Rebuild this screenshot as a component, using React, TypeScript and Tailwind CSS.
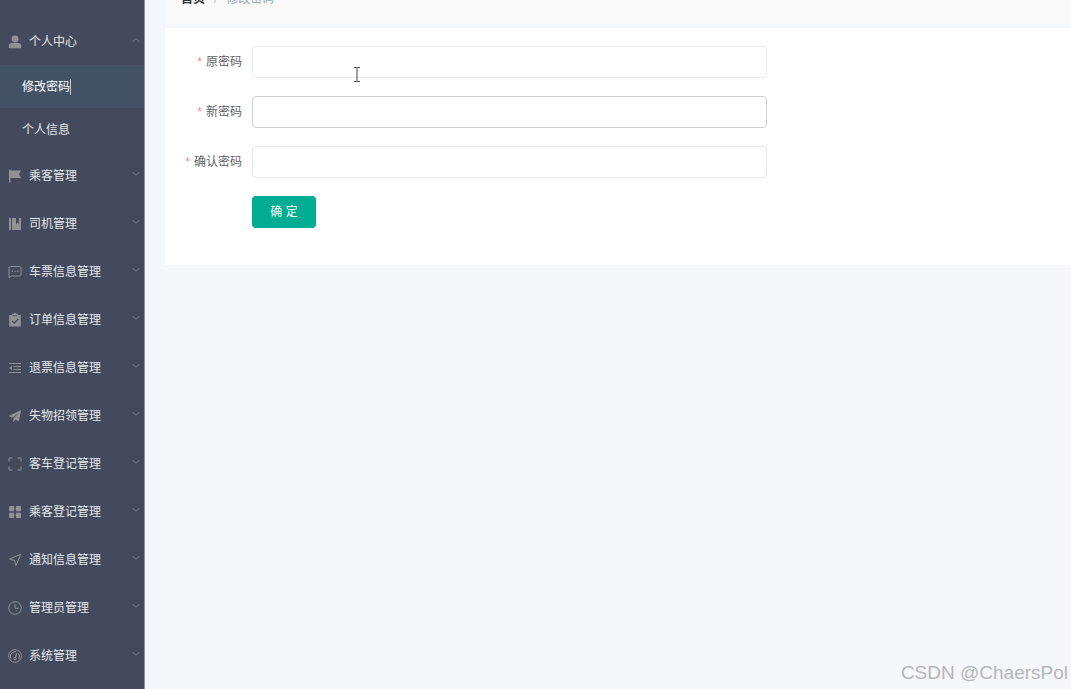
import { FormEvent, ReactElement, ReactNode, useState } from "react";

interface MenuItem {
  title: string;
  icon: ReactNode;
}

const menuItems: MenuItem[] = [
  {
    title: "乘客管理",
    icon: <path d="M1 .5h1.4v1H13l-2 3.7 2 3.8H2.4v4.5H1z" fill="currentColor" />,
  },
  {
    title: "司机管理",
    icon: (
      <path
        d="M1 1h2v12H1zM4 1h4v6l1.5-1.3L11 7V1h2v12H4z"
        fill="currentColor"
      />
    ),
  },
  {
    title: "车票信息管理",
    icon: (
      <>
        <path
          d="M2.5 1.5h9a1.5 1.5 0 0 1 1.5 1.5v6.5a1.5 1.5 0 0 1-1.5 1.5H3.6L1 12.8V3a1.5 1.5 0 0 1 1.5-1.5z"
          fill="none"
          stroke="currentColor"
        />
        <path
          d="M3.7 5.7H5V7H3.7zM6.4 5.7h1.3V7H6.4zM9.1 5.7h1.3V7H9.1z"
          fill="currentColor"
        />
      </>
    ),
  },
  {
    title: "订单信息管理",
    icon: (
      <>
        <path
          d="M1.2 2H4V.8h1.6L6 0h2l.4.8H10V2h2.800v11.500H1.200z"
          fill="currentColor"
        />
        <path d="M4.500 2.700h5" stroke="#434a5c" strokeWidth=".7" />
        <path
          d="M4 7.800l2.300 2.300L10.300 6"
          fill="none"
          stroke="#434a5c"
          strokeWidth="1.100"
        />
      </>
    ),
  },
  {
    title: "退票信息管理",
    icon: (
      <>
        <path
          d="M1 2.500h12M5.500 5.500H13M5.500 8.500H13M1 11.500h12"
          stroke="currentColor"
          strokeWidth="1.200"
        />
        <path d="M4 4.700v4.600L1.200 7z" fill="currentColor" />
      </>
    ),
  },
  {
    title: "失物招领管理",
    icon: (
      <path
        d="M13.200 1L.6 7l3.600 1.700L10.600 4 5.300 9.300v4l2.200-2.500 3.300 1.500z"
        fill="currentColor"
      />
    ),
  },
  {
    title: "客车登记管理",
    icon: (
      <path
        d="M1 4.500V1h3.500M9.500 1H13v3.500M13 9.500V13H9.500M4.500 13H1V9.500"
        fill="none"
        stroke="currentColor"
      />
    ),
  },
  {
    title: "乘客登记管理",
    icon: (
      <g fill="currentColor">
        <rect x="1" y="1" width="5.200" height="5.200" rx=".8" />
        <rect x="7.800" y="1" width="5.200" height="5.200" rx=".8" />
        <rect x="1" y="7.800" width="5.200" height="5.200" rx=".8" />
        <rect x="7.800" y="7.800" width="5.200" height="5.200" rx=".8" />
      </g>
    ),
  },
  {
    title: "通知信息管理",
    icon: (
      <path
        d="M12.800 1.200L1.500 6l5 1.500L8 12.600z"
        fill="none"
        stroke="currentColor"
        strokeLinejoin="round"
      />
    ),
  },
  {
    title: "管理员管理",
    icon: (
      <g fill="none" stroke="currentColor">
        <circle cx="7" cy="7" r="6.300" />
        <path d="M7 3.300V7.300h3.300" />
      </g>
    ),
  },
  {
    title: "系统管理",
    icon: (
      <g fill="none" stroke="currentColor">
        <circle cx="7" cy="7" r="6.300" />
        <path d="M3.200 9.800A4.500 4.500 0 0 1 8 2.800M10.300 4.300a4.500 4.500 0 0 1 .5 5.500" />
        <path d="M8.800 4.200L7.200 9" strokeWidth="1.200" />
        <circle cx="7" cy="9.600" r="1" />
      </g>
    ),
  },
];

const fields = [
  { name: "password", label: "原密码", border: "border-[#e9ebf0]" },
  { name: "newPassword", label: "新密码", border: "border-[#cfd0d3]" },
  { name: "repeatPassword", label: "确认密码", border: "border-[#e6e7eb]" },
];

const MenuIcon = ({ children }: { children: ReactNode }): ReactElement => (
  <svg viewBox="0 0 14 14" className="size-[14px] shrink-0 text-[#8f9298]">
    {children}
  </svg>
);

const Arrow = ({ open }: { open?: boolean }): ReactElement => (
  <svg viewBox="0 0 8 8" className="mb-1 ml-auto size-2 shrink-0 text-[#7d838e]">
    <path
      d={open ? "M.5 6L4 2.500 7.500 6" : "M.5 2L4 5.500 7.500 2"}
      fill="none"
      stroke="currentColor"
      strokeWidth=".9"
    />
  </svg>
);

const Sidebar = (): ReactElement => {
  const [open, setOpen] = useState(true);

  return (
    <aside className="w-[145px] shrink-0 border-r border-[#8d929c] bg-[#434a5c] pt-[18px] text-[#e4e7ec]">
      <button
        type="button"
        onClick={() => setOpen(!open)}
        className="flex h-12 w-full items-center gap-[7px] pl-2 pr-1"
      >
        <MenuIcon>
          <g fill="currentColor">
            <circle cx="7" cy="4" r="3.400" />
            <path d="M.8 13.300v-2.500c0-1.800 1.200-2.800 3-2.800h6.400c1.800 0 3 1 3 2.800v2.500z" />
          </g>
        </MenuIcon>
        个人中心
        <Arrow open={open} />
      </button>
      {open && (
        <ul className="-mt-px pb-px">
          <li>
            <a
              href="#password"
              className="flex h-[43px] items-center bg-[#435265] pl-[22px] text-white"
            >
              修改密码
              <span className="h-4 w-px bg-[#c3c9d0]" />
            </a>
          </li>
          <li>
            <a href="#info" className="flex h-[43px] items-center pl-[22px]">
              个人信息
            </a>
          </li>
        </ul>
      )}
      {menuItems.map((item) => (
        <button
          key={item.title}
          type="button"
          className="flex h-12 w-full items-center gap-[7px] pl-2 pr-1"
        >
          <MenuIcon>{item.icon}</MenuIcon>
          {item.title}
          <Arrow />
        </button>
      ))}
    </aside>
  );
};

const PasswordForm = (): ReactElement => {
  const handleSubmit = (e: FormEvent) => {
    e.preventDefault();
  };

  return (
    <form
      onSubmit={handleSubmit}
      className="flex w-[67%] flex-col gap-[18px] text-[#606266]"
    >
      {fields.map((field) => (
        <div key={field.name} className="flex items-center gap-[10px]">
          <label htmlFor={field.name} className="w-[61px] shrink-0 text-right">
            <span className="mr-1 text-[#f08a8a]">*</span>
            {field.label}
          </label>
          <input
            id={field.name}
            type="password"
            className={`h-8 min-w-0 flex-1 rounded-sm border bg-white px-3 outline-none ${field.border}`}
          />
        </div>
      ))}
      <button
        type="submit"
        className="ml-[71px] h-8 w-16 rounded-sm bg-[#00ac92] text-white"
      >
        确 定
      </button>
    </form>
  );
};

const App = (): ReactElement => {
  return (
    <div className="relative flex min-h-screen overflow-hidden bg-[#f6f7fa] font-['Liberation_Sans','Noto_Sans_CJK_SC',sans-serif] text-xs">
      <Sidebar />

      <main className="min-w-0 flex-1 pl-5">
        {/* Breadcrumb, partly scrolled out of view */}
        <nav className="-mt-[26px] flex h-[50px] items-center gap-[9px] bg-[#f9f9f9] px-4">
          <a href="#home" className="font-bold text-[#303133]">
            首页
          </a>
          <span className="text-[#c0c4cc]">/</span>
          <span className="text-[#97a8be]">修改密码</span>
        </nav>

        <section className="mt-1 bg-white px-4 pb-[37px] pt-[18px]">
          <PasswordForm />
        </section>
      </main>

      {/* Text cursor */}
      <svg
        viewBox="0 0 8 15"
        className="pointer-events-none absolute left-[353px] top-[67px] h-[15px] w-2"
      >
        <path
          d="M1 .5h2.500L4 1l.5-.5H7M4 1v13M1 14.500h2.500L4 14l.5.5H7"
          fill="none"
          stroke="#444"
        />
      </svg>

      <p className="pointer-events-none absolute bottom-1 right-[3px] text-[19px] leading-6 text-[#b4b6b9]">
        CSDN @ChaersPol
      </p>
    </div>
  );
};

export default App;
